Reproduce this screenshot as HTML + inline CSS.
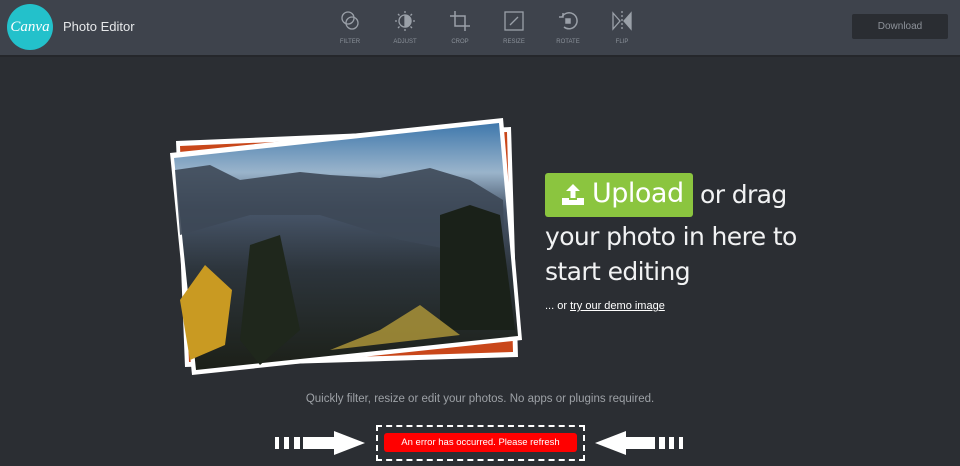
<!DOCTYPE html>
<html><head><meta charset="utf-8"><style>
*{margin:0;padding:0;box-sizing:border-box}
body{width:960px;height:466px;overflow:hidden;background:#2b2e33;font-family:"Liberation Sans","DejaVu Sans",sans-serif;position:relative}
.hdr{position:absolute;left:0;top:0;width:960px;height:57px;background:#3e434c;border-bottom:2px solid #25272b}
.logo{position:absolute;left:7px;top:4px;width:46px;height:46px;border-radius:50%;background:#23c1cb;color:#fff;font:italic 15px "Liberation Serif",serif;text-align:center;line-height:46px}
.title{position:absolute;left:63px;top:19px;color:#e6e8ea;font-size:13px}
.tool{position:absolute;top:9px;width:40px;text-align:center;color:#8a9099;font-size:6px}
.tool svg{display:block;margin:0 auto 6px}
.dl{position:absolute;left:852px;top:14px;width:96px;height:25px;background:#2a2d32;border-radius:2px;color:#8d9299;font-size:10px;text-align:center;line-height:25px}
.txt{position:absolute;left:545px;color:#f1f2f3;font-family:"DejaVu Sans",sans-serif;font-size:25px;letter-spacing:-0.6px}
.up{position:absolute;left:545px;top:173px;width:148px;height:44px;background:#8bc53f;border-radius:3px;color:#fff;font-family:"DejaVu Sans",sans-serif;font-size:27px;letter-spacing:-0.5px}
.demo{position:absolute;left:545px;top:300px;color:#fff;font-size:11px}
.demo u{color:#fff}
.tag{position:absolute;left:0;width:960px;top:393px;text-align:center;color:#9da1a6;font-size:11.5px}
.box{position:absolute;left:376px;top:425px;width:209px;height:36px;border:2px dashed #fff}
.err{position:absolute;left:384px;top:433px;width:193px;height:19px;background:#f00;border-radius:3px;color:#fff;font-size:9.5px;text-align:center;line-height:19px}
</style></head><body>
<div class="hdr">
<div class="logo">Canva</div>
<div class="title">Photo Editor</div>
<div class="tool" style="left:330px"><svg width="24" height="24" viewBox="0 0 24 24" fill="none" stroke="#9aa0a8" stroke-width="1.3"><circle cx="10" cy="9" r="6"/><circle cx="14" cy="14" r="6"/></svg>FILTER</div>
<div class="tool" style="left:385px"><svg width="24" height="24" viewBox="0 0 24 24" fill="none" stroke="#9aa0a8" stroke-width="1.3"><circle cx="12" cy="12" r="6"/><path d="M12 6a6 6 0 0 1 0 12z" fill="#9aa0a8"/><path d="M12 2v2M12 20v2M2 12h2M20 12h2M5 5l1.5 1.5M17.5 17.5L19 19M5 19l1.5-1.5M17.5 6.5L19 5"/></svg>ADJUST</div>
<div class="tool" style="left:440px"><svg width="24" height="24" viewBox="0 0 24 24" fill="none" stroke="#9aa0a8" stroke-width="1.5"><path d="M7 2v15h15M2 7h15v15"/></svg>CROP</div>
<div class="tool" style="left:494px"><svg width="24" height="24" viewBox="0 0 24 24" fill="none" stroke="#9aa0a8" stroke-width="1.3"><rect x="3" y="3" width="18" height="18"/><path d="M8 16l8-8"/></svg>RESIZE</div>
<div class="tool" style="left:548px"><svg width="24" height="24" viewBox="0 0 24 24" fill="none" stroke="#9aa0a8" stroke-width="1.5"><path d="M6 8a8 8 0 1 1 2 10"/><path d="M3 8h4V4"/><rect x="10" y="10" width="4" height="4" fill="#9aa0a8"/></svg>ROTATE</div>
<div class="tool" style="left:602px"><svg width="24" height="24" viewBox="0 0 24 24" fill="none" stroke="#9aa0a8" stroke-width="1.3"><path d="M3 4l7 8-7 8z"/><path d="M21 4l-7 8 7 8z" fill="#9aa0a8"/><path d="M12 2v20" stroke-dasharray="2 2"/></svg>FLIP</div>
<div class="dl">Download</div>
</div>
<svg style="position:absolute;left:0;top:0" width="960" height="466">
<defs>
<linearGradient id="sky" x1="0" y1="0" x2="0" y2="1"><stop offset="0" stop-color="#3f78ac"/><stop offset="0.2" stop-color="#9ab4cb"/><stop offset="0.35" stop-color="#48566a"/><stop offset="0.6" stop-color="#2c343b"/><stop offset="1" stop-color="#1c2018"/></linearGradient>
</defs>
<polygon points="176,141 511,127 518,357 185,367" fill="#fff"/>
<polygon points="180,146 507,132 513,352 189,362" fill="#c9471a"/>
<polygon points="170,153 503,118 522,340 192,375" fill="#fff"/>
<polygon points="174,158 499,123 518,336 196,370" fill="url(#sky)"/>
<polygon points="175,170 210,165 240,180 300,172 330,175 380,178 430,168 470,180 503,200 505,260 400,240 320,215 250,215 180,235" fill="#3d4857" opacity="0.9"/>
<polygon points="180,300 205,265 232,290 225,345 190,360" fill="#c99a22"/>
<polygon points="440,215 470,205 500,215 515,330 440,330" fill="#1a2119"/>
<polygon points="250,245 280,235 300,330 260,365 240,340" fill="#1f271c"/>
<polygon points="380,330 420,305 460,335 330,350" fill="#b39a3a" opacity="0.8"/>
</svg>
<div class="up"><svg style="position:absolute;left:16px;top:10px" width="24" height="24" viewBox="0 0 24 24"><path d="M12 1l-7 7h4.5v7h5V8H19z" fill="#fff"/><path d="M1 15h7v2h8v-2h7v7H1z" fill="#fff"/></svg><span style="position:absolute;left:47px;top:5px">Upload</span></div>
<div class="txt" style="left:700px;top:180px">or drag</div>
<div class="txt" style="top:222px">your photo in here to</div>
<div class="txt" style="top:257px">start editing</div>
<div class="demo">... or <u>try our demo image</u></div>
<div class="tag">Quickly filter, resize or edit your photos. No apps or plugins required.</div>
<svg style="position:absolute;left:272px;top:428px" width="100" height="30"><g fill="#fff"><rect x="3" y="9" width="4" height="12"/><rect x="12" y="9" width="5" height="12"/><rect x="22" y="9" width="6" height="12"/><rect x="31" y="9" width="32" height="12"/><polygon points="62,3 93,15 62,27"/></g></svg>
<svg style="position:absolute;left:592px;top:428px" width="100" height="30"><g fill="#fff"><polygon points="3,15 34,3 34,27"/><rect x="33" y="9" width="30" height="12"/><rect x="67" y="9" width="6" height="12"/><rect x="77" y="9" width="5" height="12"/><rect x="87" y="9" width="4" height="12"/></g></svg>
<div class="box"></div>
<div class="err">An error has occurred. Please refresh</div>
</body></html>
